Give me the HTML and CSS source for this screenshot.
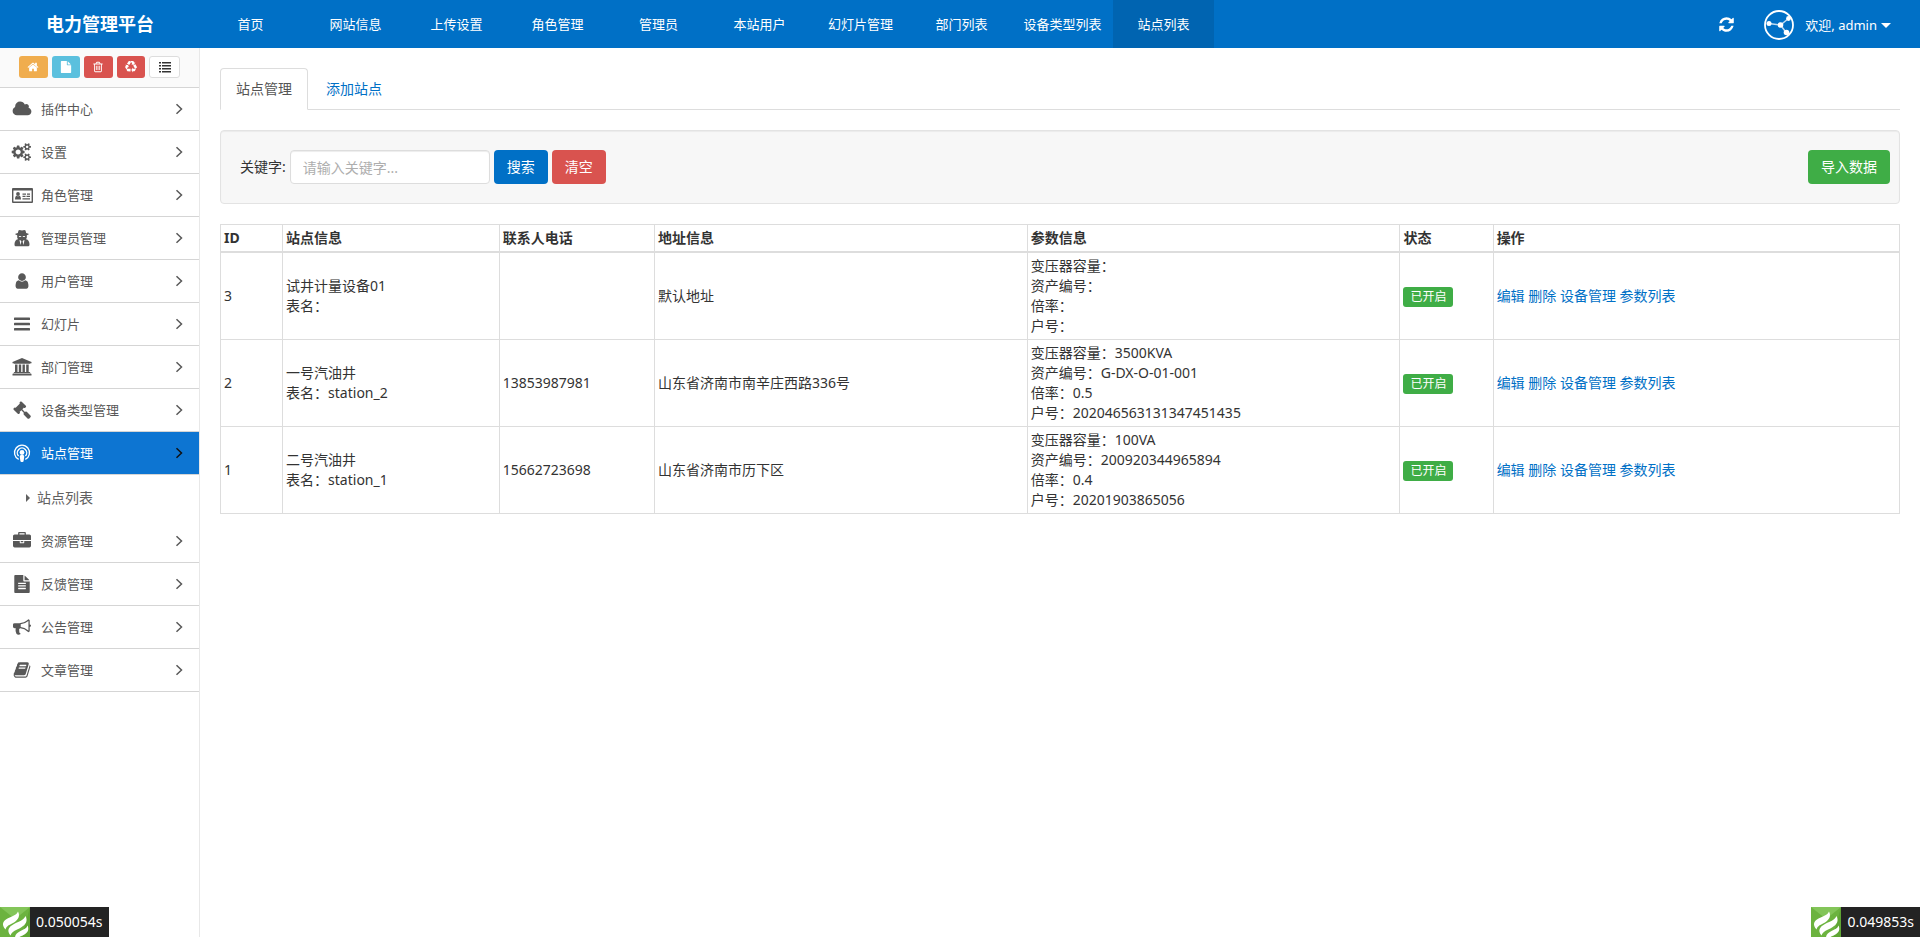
FILE: index.html
```html
<!DOCTYPE html>
<html lang="zh-CN">
<head>
<meta charset="utf-8">
<title>电力管理平台</title>
<link rel="stylesheet" href="styles.css">
</head>
<body>
<svg class="defs" aria-hidden="true">
  <symbol id="angle" viewBox="0 0 8 12"><path d="M1.5 1.2 6.5 6 1.5 10.8" fill="none" stroke="currentColor" stroke-width="1.5"/></symbol>
  <symbol id="flame" viewBox="0 0 30 30">
    <path fill="#6cb33f" d="M0 0h30v30H0z"/><path fill="#83c559" d="M0 0h30L15 12z"/><path fill="#5fa534" d="M30 0v30H22z"/>
    <g fill="#fff"><path d="M18 4.500c2.500 4.500 0 8.500-4 11-4 2.300-7.500 3-8.500 7C1 17.500 3 14 7.500 11.500c4.500-2.500 9-3 10.500-7z"/><path d="M25.500 9c2.500 5 .5 8.500-4.500 11.500-4.500 2.700-9 3.500-10.500 8-4-5-2-8.500 3.500-11.500 5-2.700 9.500-3.500 11.500-8z"/><path d="M27.500 18.500c2 4.500 0 7.500-4 9.500-2 1-3 1.300-4 2h-4.500c.5-3 2.500-4.500 5.500-6 3.500-1.700 6-2.500 7-5.500z"/></g>
  </symbol>
</svg>
<header class="navbar">
  <a class="brand" href="#">电力管理平台</a>
  <nav class="topnav">
    <a href="#">首页</a><a href="#">网站信息</a><a href="#">上传设置</a><a href="#">角色管理</a><a href="#">管理员</a><a href="#">本站用户</a><a href="#">幻灯片管理</a><a href="#">部门列表</a><a href="#">设备类型列表</a><a href="#" class="current">站点列表</a>
  </nav>
  <div class="account">
    <button class="refresh" type="button" aria-label="刷新"><svg viewBox="0 0 1792 1792"><path d="M1639 1056q0 5-1 7-64 268-268 434.500t-478 166.500q-146 0-282.500-55t-243.500-157l-129 129q-19 19-45 19t-45-19-19-45v-448q0-26 19-45t45-19h448q26 0 45 19t19 45-19 45l-137 137q71 66 161 102t187 36q134 0 250-65t186-179q11-17 53-117 8-23 30-23h192q13 0 22.500 9.500t9.500 22.500zm25-800v448q0 26-19 45t-45 19h-448q-26 0-45-19t-19-45 19-45l138-138q-148-137-349-137-134 0-250 65t-186 179q-11 17-53 117-8 23-30 23h-199q-13 0-22.500-9.500t-9.500-22.500v-7q65-268 270-434.500t480-166.500q146 0 284 55.500t245 156.500l130-129q19-19 45-19t45 19 19 45z"/></svg></button>
    <a class="user" href="#">
      <svg class="avatar" viewBox="0 0 30 30"><circle cx="15" cy="15" r="14" fill="none" stroke="#fff" stroke-width="1.800"/><path d="M5 13.500 16.500 15 24.500 8.500M16.500 15l6 8" fill="none" stroke="#fff" stroke-opacity=".75" stroke-width="1.500"/><g fill="#fff"><circle cx="5" cy="13.500" r="2.500"/><circle cx="16.500" cy="15" r="2.800"/><circle cx="24.500" cy="8.500" r="2.400"/><circle cx="22.500" cy="22.500" r="2.800"/></g></svg>
      <span>欢迎, admin</span><i class="caret"></i>
    </a>
  </div>
</header>
<div class="layout">
  <aside class="sidebar">
    <div class="shortcuts">
      <button type="button" class="mini orange" aria-label="首页"><svg viewBox="0 0 1792 1792"><path d="M1472 992v480q0 26-19 45t-45 19h-384v-384h-256v384h-384q-26 0-45-19t-19-45v-480q0-1 .5-3t.5-3l575-474 575 474q1 2 1 6zm223-69l-62 74q-8 9-21 11h-3q-13 0-21-7l-692-577-692 577q-12 8-24 7-13-2-21-11l-62-74q-8-10-7-23.500t11-21.500l719-599q32-26 76-26t76 26l244 204v-195q0-14 9-23t23-9h192q14 0 23 9t9 23v408l219 182q10 8 11 21.500t-7 23.500z"/></svg></button>
      <button type="button" class="mini cyan" aria-label="文件"><svg viewBox="0 0 1792 1792"><path d="M1152 512v-472q22 14 36 28l408 408q14 14 28 36h-472zm-128 32q0 40 28 68t68 28h544v1056q0 40-28 68t-68 28h-1344q-40 0-68-28t-28-68v-1600q0-40 28-68t68-28h800v544z"/></svg></button>
      <button type="button" class="mini red" aria-label="清理"><svg viewBox="0 0 1792 1792"><path d="M704 736v576q0 14-9 23t-23 9h-64q-14 0-23-9t-9-23v-576q0-14 9-23t23-9h64q14 0 23 9t9 23zm256 0v576q0 14-9 23t-23 9h-64q-14 0-23-9t-9-23v-576q0-14 9-23t23-9h64q14 0 23 9t9 23zm256 0v576q0 14-9 23t-23 9h-64q-14 0-23-9t-9-23v-576q0-14 9-23t23-9h64q14 0 23 9t9 23zm128 724v-948h-896v948q0 22 7 40.500t14.500 27 10.500 8.500h832q3 0 10.500-8.500t14.500-27 7-40.500zm-672-1076h448l-48-117q-7-9-17-11h-317q-10 2-17 11zm928 32v64q0 14-9 23t-23 9h-96v948q0 83-47 143.500t-113 60.500h-832q-66 0-113-58.500t-47-141.500v-952h-96q-14 0-23-9t-9-23v-64q0-14 9-23t23-9h309l70-167q15-37 54-63t79-26h320q40 0 79 26t54 63l70 167h309q14 0 23 9t9 23z"/></svg></button>
      <button type="button" class="mini red" aria-label="回收站"><svg viewBox="0 0 1792 1792"><path d="M836 1169l-15 368-2 22-420-29q-36-3-67-31.500t-47-65.500q-11-27-14.500-55t4-65 12-55 21.500-64 19-53q78 12 509 28zm-387-586l180 379-147-92q-63 72-111.500 144.500t-72.500 125-39.500 94.500-18.500 63l-4 21-190-357q-17-26-18-56t6-47l8-18q35-63 114-188l-140-86zm1231 517l-188 359q-12 29-36.500 46.500t-43.500 20.500l-18 4q-71 7-219 12l8 164-230-367 211-362 7 173q170 16 283 5t170-33zm-785-924q-47 63-265 435l-317-187-19-12 225-356q20-31 60-45t80-10q24 2 48.500 12t42 21 41.500 33 36 34.500 36 39.500 32 35zm655 307l212 363q18 37 12.500 76t-27.500 74q-13 20-33 37t-38 28-48.500 22-47 16-51.500 14-46 12q-34-72-265-436l313-195zm-143-226l142-83-220 373-419-20 151-86q-34-89-75-166t-75.500-123.500-64.500-80-47-46.500l-17-13 405 1q31-3 58 10.500t39 28.500l11 15q39 61 112 190z"/></svg></button>
      <button type="button" class="mini plain" aria-label="列表"><svg viewBox="0 0 12 12"><path d="M0 1h2v1.500H0zM3 1h9v1.500H3zM0 4h2v1.500H0zM3 4h9v1.500H3zM0 7h2v1.500H0zM3 7h9v1.500H3zM0 10h2v1.500H0zM3 10h9v1.500H3z"/></svg></button>
    </div>
    <nav class="menu">
      <a href="#"><svg class="icon" viewBox="0 0 2048 1792"><path d="M1984 1152q0 159-112.500 271.500t-271.500 112.500h-1088q-185 0-316.500-131.500t-131.500-316.500q0-132 71-241.500t187-163.500q-2-28-2-43 0-212 150-362t362-150q158 0 286.500 88t187.500 230q70-62 166-62 106 0 181 75t75 181q0 75-41 138 129 30 213 134.500t84 239.500z"/></svg><span>插件中心</span><svg class="angle"><use href="#angle"/></svg></a>
      <a href="#"><svg class="icon" viewBox="0 0 1920 1792"><path d="M832 896q0-106-75-181t-181-75-181 75-75 181 75 181 181 75 181-75 75-181zm768 512q0-52-38-90t-90-38-90 38-38 90q0 53 37.500 90.500t90.500 37.500 90.500-37.500 37.500-90.500zm0-1024q0-52-38-90t-90-38-90 38-38 90q0 53 37.500 90.500t90.500 37.500 90.500-37.500 37.500-90.500zm-384 421v185q0 10-7 19.500t-16 10.500l-155 24q-11 35-32 76 34 48 90 115 7 11 7 20 0 12-7 19-23 30-82.500 89.500t-78.500 59.500q-11 0-21-7l-115-90q-37 19-77 31-11 108-23 155-7 24-30 24h-186q-11 0-20-7.500t-10-17.500l-23-153q-34-10-75-31l-118 89q-7 7-20 7-11 0-21-8-144-133-144-160 0-9 7-19 10-14 41-53t47-61q-23-44-35-82l-152-24q-10-1-17-9.500t-7-19.500v-185q0-10 7-19.500t16-10.500l155-24q11-35 32-76-34-48-90-115-7-11-7-20 0-12 7-20 22-30 82-89t79-59q11 0 21 7l115 90q34-18 77-32 11-108 23-154 7-24 30-24h186q11 0 20 7.500t10 17.500l23 153q34 10 75 31l118-89q8-7 20-7 11 0 21 8 144 133 144 160 0 8-7 19-12 16-42 54t-45 60q23 48 34 82l152 23q10 2 17 10.500t7 19.500zm640 533v140q0 16-149 31-12 27-30 52 51 113 51 138 0 4-4 7-122 71-124 71-8 0-46-47t-52-68q-20 2-30 2t-30-2q-14 21-52 68t-46 47q-2 0-124-71-4-3-4-7 0-25 51-138-18-25-30-52-149-15-149-31v-140q0-16 149-31 13-29 30-52-51-113-51-138 0-4 4-7 4-2 35-20t59-34 30-16q8 0 46 46.500t52 67.500q20-2 30-2t30 2q51-71 92-112l6-2q4 0 124 70 4 3 4 7 0 25-51 138 17 23 30 52 149 15 149 31zm0-1024v140q0 16-149 31-12 27-30 52 51 113 51 138 0 4-4 7-122 71-124 71-8 0-46-47t-52-68q-20 2-30 2t-30-2q-14 21-52 68t-46 47q-2 0-124-71-4-3-4-7 0-25 51-138-18-25-30-52-149-15-149-31v-140q0-16 149-31 13-29 30-52-51-113-51-138 0-4 4-7 4-2 35-20t59-34 30-16q8 0 46 46.500t52 67.500q20-2 30-2t30 2q51-71 92-112l6-2q4 0 124 70 4 3 4 7 0 25-51 138 17 23 30 52 149 15 149 31z"/></svg><span>设置</span><svg class="angle"><use href="#angle"/></svg></a>
      <a href="#"><svg class="icon" viewBox="0 0 20 18"><path fill-rule="evenodd" d="M1 2h19a1 1 0 0 1 1 1v13a1 1 0 0 1-1 1H1a1 1 0 0 1-1-1V3a1 1 0 0 1 1-1zm.4 2.600v11h18.200v-11z"/><circle cx="6" cy="8" r="1.900"/><path d="M3 13.500c0-3 1-3.800 1.800-3.800.8.700 1.600.7 2.400 0C8 9.700 9 10.500 9 13.500zM10.500 7.500h3.500v1.200h-3.500zM15 7.500h3v1.200h-3zM10.500 9.800h3v1.200h-3zM14.500 9.800H18v1.200h-3.500zM10.500 12.200H18v1.200h-7.500z"/></svg><span>角色管理</span><svg class="angle"><use href="#angle"/></svg></a>
      <a href="#"><svg class="icon" viewBox="0 0 18 18"><path fill-rule="evenodd" d="M5.500 1.500C6 .8 7 .8 9 1.500c2-.7 3-.7 3.500 0L13.200 4l2.300.8c.5.300.3.700-.5 1l-1.200.4v2.600L13 10.200l1.200.3c1.700 1 2.300 3 2.300 5.200 0 1-.8 1.600-1.800 1.600H3.300c-1 0-1.800-.6-1.800-1.600 0-2.200.6-4.200 2.300-5.200l1.200-.3-.8-1.400V6.200L3 5.800c-.8-.3-1-.7-.5-1L4.800 4zM5.800 7c.2 1.300 2.200 1.300 2.700.1h1c.5 1.200 2.500 1.200 2.700-.1zM6.500 11l1 5 .9-3.500-.6-.9zM11.500 11l-1 5-.9-3.500.6-.9z"/></svg><span>管理员管理</span><svg class="angle"><use href="#angle"/></svg></a>
      <a href="#"><svg class="icon" viewBox="0 0 1792 1792"><path d="M1536 1399q0 109-62.500 187t-150.500 78h-854q-88 0-150.500-78t-62.500-187q0-85 8.500-160.500t31.500-152 58.500-131 94-89 134.500-34.500q131 128 313 128t313-128q76 0 134.500 34.500t94 89 58.500 131 31.500 152 8.500 160.500zm-256-887q0 159-112.500 271.500t-271.500 112.500-271.500-112.500-112.500-271.500 112.500-271.500 271.500-112.500 271.500 112.500 112.500 271.500z"/></svg><span>用户管理</span><svg class="angle"><use href="#angle"/></svg></a>
      <a href="#"><svg class="icon" viewBox="0 0 18 18"><rect x="1" y="2.500" width="16" height="2.600" rx=".6"/><rect x="1" y="7.700" width="16" height="2.600" rx=".6"/><rect x="1" y="12.900" width="16" height="2.600" rx=".6"/></svg><span>幻灯片</span><svg class="angle"><use href="#angle"/></svg></a>
      <a href="#"><svg class="icon" viewBox="0 0 19 18"><path d="M9.500 0 19 4v1.200h-1.200v.6H1.200v-.6H0V4zM2.500 6.500H5v7.400h1.300V6.500h2.400v7.400H10V6.500h2.400v7.400h1.300V6.500h2.500v7.400h.9l.6.500v.6H1.300v-.6l.6-.5h.6zM.6 15.600h17.800l.6.500v1.500H0v-1.500z"/></svg><span>部门管理</span><svg class="angle"><use href="#angle"/></svg></a>
      <a href="#"><svg class="icon" viewBox="0 0 1792 1792"><path d="M1771 1536q0 53-37 90l-107 108q-39 37-91 37-53 0-90-37l-363-364q-38-36-38-90 0-53 43-96l-256-256-126 126q-14 14-34 14t-34-14q2 2 12.500 12t12.500 13 10 11.500 10 13.500 6 13.500 5.500 16.500 1.500 18q0 38-28 68-3 3-16.500 18t-19 20.500-18.500 16.500-22 15.500-22 9-26 4.500q-40 0-68-28l-408-408q-28-28-28-68 0-13 4.500-26t9-22 15.500-22 16.500-18.500 20.500-19 18-16.500q30-28 68-28 10 0 18 1.500t16.500 5.500 13.500 6 13.500 10 11.500 10 13 12.500 12 12.500q-14-14-14-34t14-34l348-348q14-14 34-14t34 14q-2-2-12.500-12t-12.500-13-10-11.500-10-13.500-6-13.500-5.500-16.500-1.500-18q0-38 28-68 3-3 16.500-18t19-20.500 18.500-16.500 22-15.500 22-9 26-4.500q40 0 68 28l408 408q28 28 28 68 0 13-4.500 26t-9 22-15.500 22-16.500 18.500-20.500 19-18 16.500q-30 28-68 28-10 0-18-1.500t-16.500-5.500-13.500-6-13.500-10-11.500-10-13-12.500-12-12.500q14 14 14 34t-14 34l-126 126 256 256q43-43 96-43 52 0 91 37l363 363q37 39 37 91z"/></svg><span>设备类型管理</span><svg class="angle"><use href="#angle"/></svg></a>
      <a href="#" class="active"><svg class="icon" viewBox="0 0 18 18"><g fill="none" stroke="currentColor"><path d="M5.700 15.400a7.500 7.500 0 1 1 6.600 0" stroke-width="1.300"/><path d="M5.600 12a4.700 4.700 0 1 1 6.800 0" stroke-width="1.400"/></g><circle cx="9" cy="8.500" r="2.400"/><path d="M6.700 12.600c0-1.200 1-1.500 2.300-1.500s2.300.3 2.300 1.500L10.600 17c-.1.700-.7 1-1.600 1s-1.500-.3-1.600-1z"/></svg><span>站点管理</span><svg class="angle"><use href="#angle"/></svg></a>
      <div class="submenu"><a href="#"><i class="marker"></i>站点列表</a></div>
      <a href="#"><svg class="icon" viewBox="0 0 1792 1792"><path d="M640 256h512v-128h-512v128zm1152 640v480q0 66-47 113t-113 47h-1472q-66 0-113-47t-47-113v-480h672v160q0 26 19 45t45 19h320q26 0 45-19t19-45v-160h672zm-768 0v128h-256v-128h256zm768-480v384h-1792v-384q0-66 47-113t113-47h352v-160q0-40 28-68t68-28h576q40 0 68 28t28 68v160h352q66 0 113 47t47 113z"/></svg><span>资源管理</span><svg class="angle"><use href="#angle"/></svg></a>
      <a href="#"><svg class="icon" viewBox="0 0 1792 1792"><path d="M1596 476q14 14 28 36h-472v-472q22 14 36 28zm-476 164h544v1056q0 40-28 68t-68 28h-1344q-40 0-68-28t-28-68v-1600q0-40 28-68t68-28h800v544q0 40 28 68t68 28zm160 736v-64q0-14-9-23t-23-9h-704q-14 0-23 9t-9 23v64q0 14 9 23t23 9h704q14 0 23-9t9-23zm0-256v-64q0-14-9-23t-23-9h-704q-14 0-23 9t-9 23v64q0 14 9 23t23 9h704q14 0 23-9t9-23zm0-256v-64q0-14-9-23t-23-9h-704q-14 0-23 9t-9 23v64q0 14 9 23t23 9h704q14 0 23-9t9-23z"/></svg><span>反馈管理</span><svg class="angle"><use href="#angle"/></svg></a>
      <a href="#"><svg class="icon" viewBox="0 0 1792 1792"><path d="M1664 640q53 0 90.500 37.500t37.500 90.500-37.500 90.500-90.500 37.500v384q0 52-38 90t-90 38q-417-347-812-380-58 19-91 66t-31 100.500 40 92.500q-20 33-23 65.500t6 58 33.500 55 48 50 61.500 50.500q-29 58-111.500 83t-168.500 11.500-132-55.500q-7-23-29.500-87.500t-32-94.500-23-89-15-101 3.500-98.500 22-110.500h-122q-66 0-113-47t-47-113v-192q0-66 47-113t113-47h480q435 0 896-384 52 0 90 38t38 90v384zm-128 604v-954q-394 302-768 343v270q377 42 768 341z"/></svg><span>公告管理</span><svg class="angle"><use href="#angle"/></svg></a>
      <a href="#"><svg class="icon" viewBox="0 0 1792 1792"><path d="M1703 478q40 57 18 129l-275 906q-19 64-76.500 107.500t-122.500 43.500h-923q-77 0-148.500-53.500t-99.500-131.500q-24-67-2-127 0-4 3-27t4-37q1-8-3-21.500t-3-19.500q2-11 8-21t16.500-23.500 16.500-23.500q23-38 45-91.500t30-91.500q3-10 .5-30t-.5-28q3-11 17-28t17-23q21-36 42-92t25-90q1-9-2.500-32t.5-28q4-13 22-30.500t22-22.500q19-26 42.500-84.500t27.500-96.500q1-8-3-25.500t-2-26.500q2-8 9-18t18-23 17-21q8-12 16.500-30.500t15-35 16-36 19.500-32 26.500-23.500 36-11.500 47.500 5.500l-1 3q38-9 51-9h761q74 0 114 56t18 130l-274 906q-36 119-71.500 153.500t-128.500 34.500h-869q-27 0-38 15-11 16-1 43 24 70 144 70h923q29 0 56-15.500t35-41.500l300-987q7-22 5-57 38 15 59 43zm-1064 2q-4 13 2 22.500t20 9.500h608q13 0 25.500-9.500t16.500-22.500l21-64q4-13-2-22.500t-20-9.500h-608q-13 0-25.500 9.500t-16.500 22.500zm-83 256q-4 13 2 22.500t20 9.500h608q13 0 25.500-9.500t16.500-22.500l21-64q4-13-2-22.500t-20-9.500h-608q-13 0-25.500 9.500t-16.500 22.500z"/></svg><span>文章管理</span><svg class="angle"><use href="#angle"/></svg></a>
    </nav>
  </aside>
  <main class="content">
    <nav class="tabs"><a href="#" class="selected">站点管理</a><a href="#">添加站点</a></nav>
    <form class="well">
      <label for="keyword">关键字:</label>
      <input id="keyword" type="text" placeholder="请输入关键字...">
      <button type="button" class="btn blue">搜索</button>
      <button type="button" class="btn red">清空</button>
      <button type="button" class="btn green">导入数据</button>
    </form>
    <table class="stations">
      <thead>
        <tr><th class="c-id">ID</th><th class="c-info">站点信息</th><th class="c-phone">联系人电话</th><th class="c-wide">地址信息</th><th class="c-wide">参数信息</th><th class="c-state">状态</th><th>操作</th></tr>
      </thead>
      <tbody>
        <tr><td>3</td><td>试井计量设备01<br>表名：</td><td></td><td>默认地址</td><td>变压器容量：<br>资产编号：<br>倍率：<br>户号：</td><td><span class="label">已开启</span></td><td><a href="#">编辑</a> <a href="#">删除</a> <a href="#">设备管理</a> <a href="#">参数列表</a></td></tr>
        <tr><td>2</td><td>一号汽油井<br>表名：station_2</td><td>13853987981</td><td>山东省济南市南辛庄西路336号</td><td>变压器容量：3500KVA<br>资产编号：G-DX-O-01-001<br>倍率：0.5<br>户号：202046563131347451435</td><td><span class="label">已开启</span></td><td><a href="#">编辑</a> <a href="#">删除</a> <a href="#">设备管理</a> <a href="#">参数列表</a></td></tr>
        <tr><td>1</td><td>二号汽油井<br>表名：station_1</td><td>15662723698</td><td>山东省济南市历下区</td><td>变压器容量：100VA<br>资产编号：200920344965894<br>倍率：0.4<br>户号：20201903865056</td><td><span class="label">已开启</span></td><td><a href="#">编辑</a> <a href="#">删除</a> <a href="#">设备管理</a> <a href="#">参数列表</a></td></tr>
      </tbody>
    </table>
  </main>
</div>
<div class="trace trace-left"><svg><use href="#flame"/></svg><span>0.050054s</span></div>
<div class="trace trace-right"><svg><use href="#flame"/></svg><span>0.049853s</span></div>
</body>
</html>
```
FILE: styles.css
```css
* { box-sizing: border-box; }
body {
  margin: 0;
  min-height: 100vh;
  display: flex;
  flex-direction: column;
  font: 14px/20px "Noto Sans", "Noto Sans CJK SC", sans-serif;
  color: #333;
  background: #fff;
}
a { color: #0070c6; text-decoration: none; }
button, input { font: inherit; }
button { cursor: pointer; }
svg { display: block; fill: currentColor; }
.defs { position: absolute; width: 0; height: 0; }

.navbar { display: flex; height: 48px; background: #0070c6; font-size: 13px; }
.navbar a { color: #fff; }
.brand { width: 200px; line-height: 48px; text-align: center; font-size: 18px; font-weight: bold; }
.topnav { display: flex; flex: 1; }
.topnav a { width: 101px; line-height: 48px; text-align: center; white-space: nowrap; }
.topnav a:first-child { margin-right: 4px; }
.topnav .current { background: #0064b1; }
.account { display: flex; align-items: center; gap: 29px; padding-right: 29px; }
.refresh { padding: 0; border: 0; background: none; color: #fff; }
.refresh svg { width: 17px; height: 17px; }
.user { display: flex; align-items: center; padding-top: 2px; }
.avatar { width: 30px; height: 30px; margin-right: 11px; }
.caret { margin-left: 4px; border: 5px solid transparent; border-top-color: #fff; border-bottom: 0; }

.layout { display: flex; flex: 1; }
.sidebar { width: 200px; border-right: 1px solid #e8e8e8; }
.shortcuts { display: flex; gap: 4px; height: 40px; padding: 8px 19px; background: #fafafa; border-bottom: 1px solid #d5d5d5; }
.mini { display: grid; place-items: center; flex: 1; height: 22px; padding: 0; border: 0; border-radius: 3px; color: #fff; }
.mini svg { width: 12px; height: 12px; }
.orange { background: #f0ad4e; }
.cyan { background: #5bc0de; }
.red { background: #d9534f; }
.blue { background: #0070c6; }
.green { background: #3fad46; }
.plain { background: #fff; border: 1px solid #ddd; color: #333; }
.menu > a { display: flex; align-items: center; height: 43px; padding: 0 16px 0 12px; border-bottom: 1px solid #d5d5d5; font-size: 13px; color: #585858; }
.menu > .active { background: #0d75d2; color: #fff; }
.active .angle { color: #111; }
.icon { width: 20px; height: 18px; margin-right: 9px; overflow: visible; }
.angle { width: 8px; height: 12px; margin-left: auto; }
.submenu a { display: flex; align-items: center; gap: 7px; height: 45px; padding-left: 26px; color: #616161; }
.marker { border: 4px solid transparent; border-left-color: #616161; border-right: 0; }

.content { flex: 1; padding: 20px; }
.tabs { display: flex; margin-bottom: 20px; border-bottom: 1px solid #ddd; }
.tabs a { margin: 0 2px -1px 0; padding: 10px 15px; border: 1px solid transparent; border-radius: 4px 4px 0 0; }
.tabs .selected { color: #555; background: #fff; border-color: #ddd #ddd #fff; }
.well { display: flex; align-items: center; gap: 4px; margin-bottom: 20px; padding: 19px 9px 19px 19px; background: #f7f7f7; border: 1px solid #e3e3e3; border-radius: 4px; box-shadow: inset 0 1px 1px rgba(0, 0, 0, .05); }
.well input { width: 200px; height: 34px; padding: 6px 12px; border: 1px solid #ddd; border-radius: 4px; background: #fff; color: #555; box-shadow: inset 0 1px 1px rgba(0, 0, 0, .075); }
.well input::placeholder { color: #aeaeae; }
.btn { height: 34px; padding: 0 13px; border: 0; border-radius: 4px; color: #fff; }
.btn.green { margin-left: auto; }

.stations { width: 100%; table-layout: fixed; border-collapse: collapse; }
.stations th, .stations td { padding: 3px; border: 1px solid #ddd; text-align: left; vertical-align: middle; }
.stations th { border-bottom-width: 2px; }
.c-id { width: 3.7%; }
.c-info { width: 12.9%; }
.c-phone { width: 9.25%; }
.c-wide { width: 22.2%; }
.c-state { width: 5.55%; }
.label { display: inline-block; padding: 0 7px; border-radius: 3px; background: #3fad46; color: #fff; font-size: 12px; vertical-align: middle; }

.trace { position: fixed; bottom: 0; display: flex; background: #232323; color: #fff; line-height: 30px; }
.trace svg { width: 30px; height: 30px; }
.trace span { padding: 0 6px; }
.trace-left { left: 0; }
.trace-right { right: 0; }
```
